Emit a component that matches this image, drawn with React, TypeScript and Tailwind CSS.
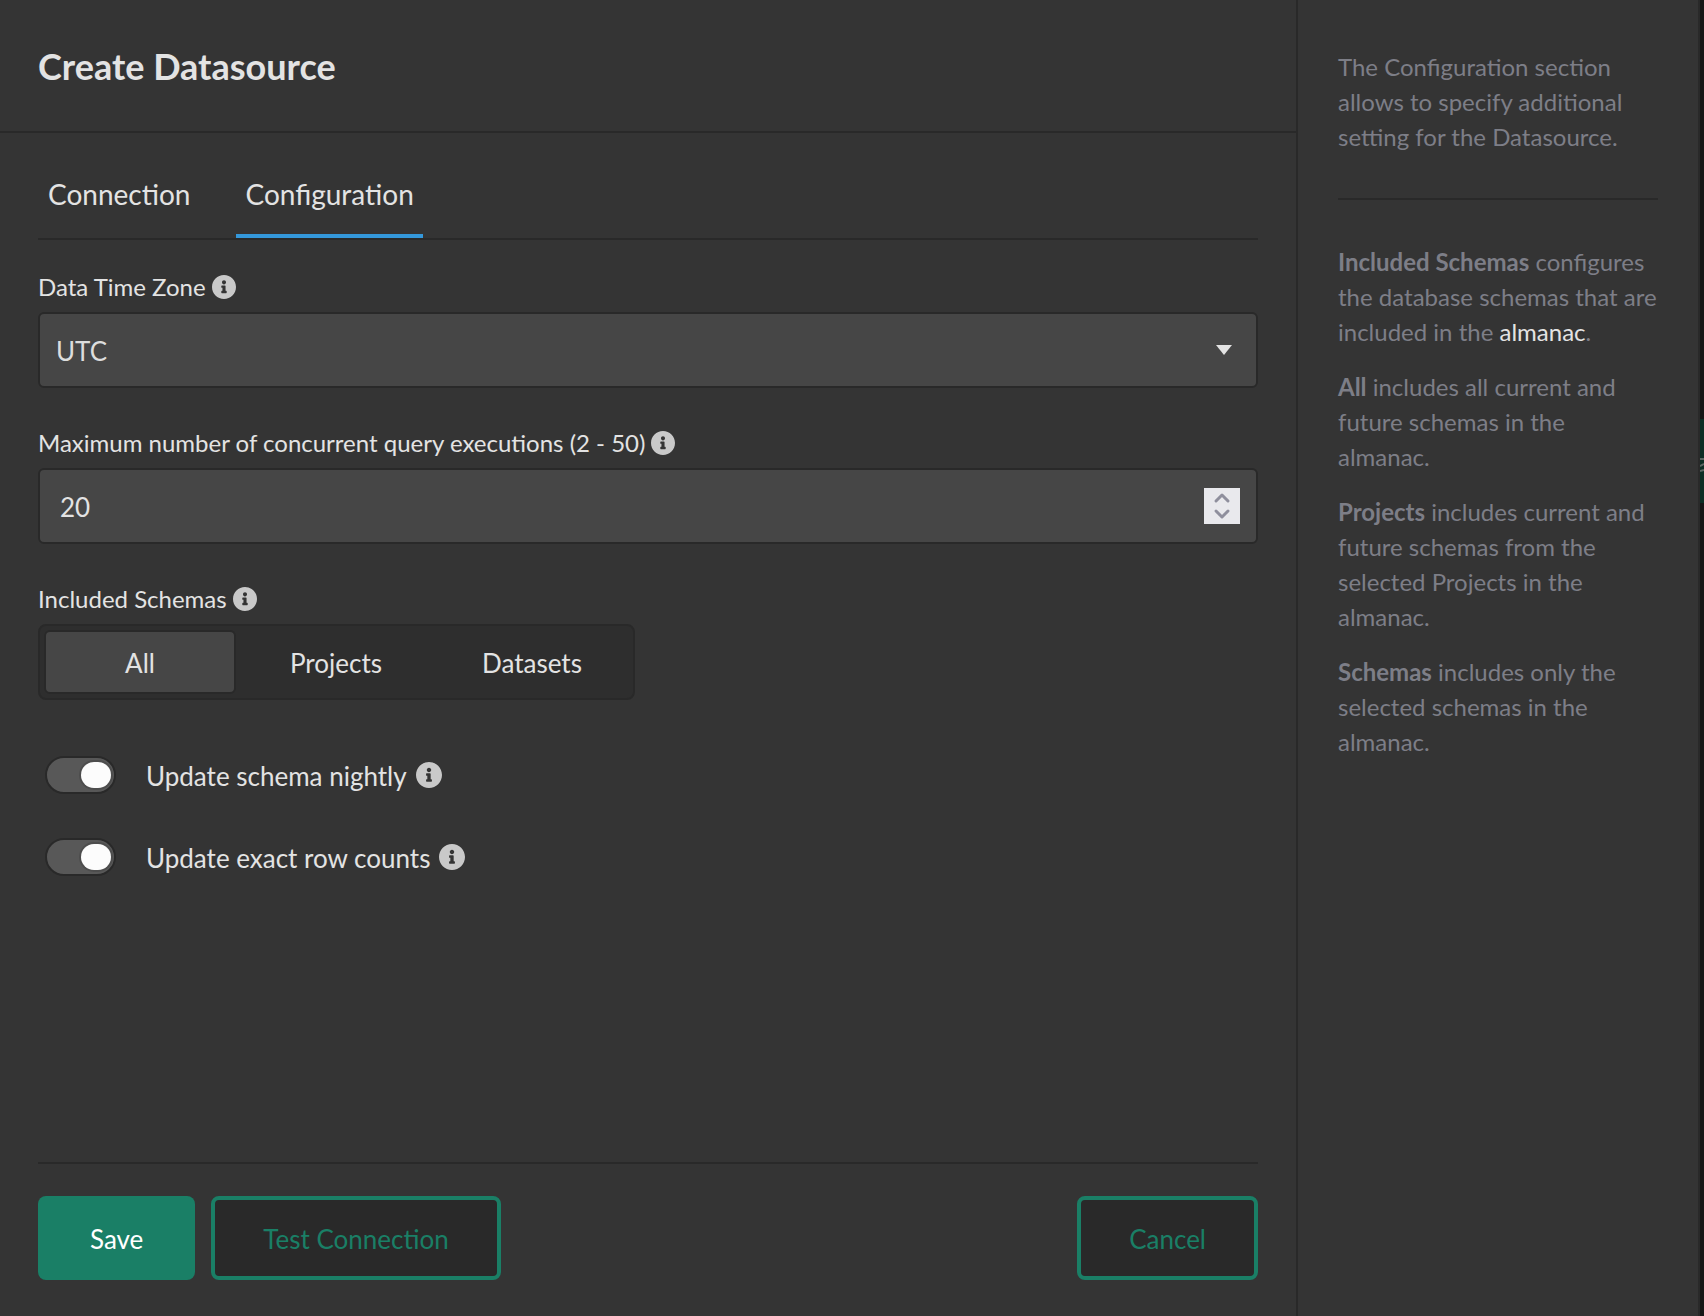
import { useState } from "react";

function InfoIcon({ large = false }: { large?: boolean }) {
  return (
    <svg viewBox="8 8 496 496" className={large ? "size-[26px] shrink-0" : "size-6 shrink-0"} role="img" aria-label="More information">
      <path
        fill="#c9c9c9"
        d="M256 8C119.043 8 8 119.083 8 256c0 136.997 111.043 248 248 248s248-111.003 248-248C504 119.083 392.957 8 256 8zm0 110c23.196 0 42 18.804 42 42s-18.804 42-42 42-42-18.804-42-42 18.804-42 42-42zm56 254c0 6.627-5.373 12-12 12h-88c-6.627 0-12-5.373-12-12v-24c0-6.627 5.373-12 12-12h12v-64h-12c-6.627 0-12-5.373-12-12v-24c0-6.627 5.373-12 12-12h64c6.627 0 12 5.373 12 12v100h12c6.627 0 12 5.373 12 12v24z"
      />
    </svg>
  );
}

function Toggle({ id, label }: { id: string; label: string }) {
  const [on, setOn] = useState(true);
  return (
    <div className="flex h-[42px] items-center pl-[7px]">
      <div className="relative flex h-[38px] w-[71px] shrink-0 items-center">
        <input
          id={id}
          type="checkbox"
          role="switch"
          checked={on}
          onChange={(e) => setOn(e.target.checked)}
          className="peer absolute inset-0 m-0 size-full cursor-pointer appearance-none rounded-full border-2 border-[#292929] bg-[#585858]"
        />
        <span className="pointer-events-none relative ml-1 h-[26px] w-[30px] rounded-full bg-[#fcfcfc] shadow-[0_0_0_2px_#4d4d4d] peer-checked:ml-9" />
      </div>
      <label htmlFor={id} className="mr-[9px] ml-[30px] pt-[2px] text-[26px] leading-10">
        {label}
      </label>
      <InfoIcon large />
    </div>
  );
}

const schemas = ["All", "Projects", "Datasets"];
const outline =
  "h-[84px] rounded-lg border-4 border-[#1a7f66] bg-[#292929] px-12 pt-[2px] text-[26px] text-[#1a7f66]";

export default function App() {
  const [tab, setTab] = useState("Configuration");
  const [schema, setSchema] = useState("All");
  const [count, setCount] = useState(20);

  return (
    <div className="flex min-h-screen bg-[#343434] font-['Lato',sans-serif] text-[#e3e3e3]">
      <main className="flex min-w-0 flex-1 flex-col">
        <header className="flex h-[133px] items-center border-b-2 border-[#292929] pl-[38px]">
          <h1 className="text-[36px] leading-[44px] font-bold">Create Datasource</h1>
        </header>
        <form className="flex flex-1 flex-col px-[38px]" onSubmit={(e) => e.preventDefault()}>
          <div role="tablist" className="flex h-[107px] items-end gap-[37px] border-b-2 border-[#292929] pl-px">
            {["Connection", "Configuration"].map((t) => (
              <button
                key={t}
                type="button"
                role="tab"
                aria-selected={t === tab}
                onClick={() => setTab(t)}
                className={
                  t === tab
                    ? "h-[88px] border-b-4 border-[#3498db] px-[9px] pt-1 text-[28px] leading-9"
                    : "h-[88px] border-b-4 border-transparent px-[9px] pt-1 text-[28px] leading-9"
                }
              >
                {t}
              </button>
            ))}
          </div>

          <div className="mt-[31px] flex h-8 items-center gap-[6px]">
            <label htmlFor="zone" className="text-2xl">Data Time Zone</label>
            <InfoIcon />
          </div>
          <div className="relative mt-[9px]">
            <select
              id="zone"
              className="block h-[76px] w-full appearance-none rounded-md border-2 border-[#292929] bg-[#464646] px-4 pt-[2px] text-[26px] text-[#dddddd]"
            >
              <option>UTC</option>
            </select>
            <svg viewBox="0 0 16 10" className="pointer-events-none absolute top-[33px] right-[26px] h-[10px] w-4">
              <path d="M0 0h16L8 10z" fill="#e3e3e3" />
            </svg>
          </div>

          <div className="mt-[39px] flex h-8 items-center gap-[6px]">
            <label htmlFor="max" className="text-2xl">Maximum number of concurrent query executions (2 - 50)</label>
            <InfoIcon />
          </div>
          <div className="mt-[9px] flex h-[76px] items-center rounded-md border-2 border-[#292929] bg-[#464646] pr-4 pl-5">
            <input
              id="max"
              type="number"
              min={2}
              max={50}
              value={count}
              onChange={(e) => setCount(Number(e.target.value))}
              className="min-w-0 flex-1 appearance-none bg-transparent pt-[2px] text-[26px] outline-none [appearance:textfield] [&::-webkit-inner-spin-button]:appearance-none"
            />
            <div className="flex size-9 flex-col bg-[#e9e9ed]">
              <button type="button" aria-label="Increase" onClick={() => setCount(Math.min(50, count + 1))} className="flex h-[18px] items-center justify-center">
                <svg viewBox="0 0 36 18" className="h-[18px] w-9">
                  <path d="M12 13l6-6 6 6" fill="none" stroke="#8f8f9d" strokeWidth="3" strokeLinecap="round" strokeLinejoin="round" />
                </svg>
              </button>
              <button type="button" aria-label="Decrease" onClick={() => setCount(Math.max(2, count - 1))} className="flex h-[18px] items-center justify-center">
                <svg viewBox="0 0 36 18" className="h-[18px] w-9">
                  <path d="M12 5l6 6 6-6" fill="none" stroke="#8f8f9d" strokeWidth="3" strokeLinecap="round" strokeLinejoin="round" />
                </svg>
              </button>
            </div>
          </div>

          <div className="mt-[39px] flex h-8 items-center gap-[6px]">
            <span id="schemas-label" className="text-2xl">Included Schemas</span>
            <InfoIcon />
          </div>
          <div role="group" aria-labelledby="schemas-label" className="mt-[9px] flex h-[76px] items-center gap-1 self-start rounded-lg border-2 border-[#292929] bg-[#2e2e2e] py-1 pr-[5px] pl-1">
            {schemas.map((s) => (
              <button
                key={s}
                type="button"
                aria-pressed={s === schema}
                onClick={() => setSchema(s)}
                className={
                  s === schema
                    ? "h-16 w-48 rounded-md border-2 border-[#292929] bg-[#464646] pt-[2px] text-[26px]"
                    : "h-16 w-48 rounded-md border-2 border-transparent pt-[2px] text-[26px]"
                }
              >
                {s}
              </button>
            ))}
          </div>

          <div className="mt-[54px] flex flex-col gap-10">
            <Toggle id="nightly" label="Update schema nightly" />
            <Toggle id="counts" label="Update exact row counts" />
          </div>

          <footer className="mt-auto flex gap-4 border-t-2 border-[#292929] pt-8 pb-9">
            <button type="submit" className="h-[84px] rounded-lg bg-[#1a7f66] px-[52px] pt-[2px] text-[26px] text-white">Save</button>
            <button type="button" className={outline}>Test Connection</button>
            <button type="button" className={outline + " ml-auto"}>Cancel</button>
          </footer>
        </form>
      </main>

      <aside className="w-[404px] shrink-0 border-x-2 border-[#292929] px-10 pt-[49px] text-2xl leading-[35px] text-[#7d7e87]">
        <p>The Configuration section allows to specify additional setting for the Datasource.</p>
        <hr className="my-11 border-t-2 border-[#292929]" />
        <div className="flex flex-col gap-5">
          <p>
            <b>Included Schemas</b> configures the database schemas that are included in the{" "}
            <a href="#almanac" className="text-[#e3e3e3]">almanac</a>.
          </p>
          <p><b>All</b> includes all current and future schemas in the almanac.</p>
          <p><b>Projects</b> includes current and future schemas from the selected Projects in the almanac.</p>
          <p><b>Schemas</b> includes only the selected schemas in the almanac.</p>
        </div>
      </aside>

      <div className="w-1 shrink-0 bg-[#161616] pt-[419px]">
        <div className="flex h-[84px] items-center bg-[#0d2e25]">
          <svg viewBox="0 0 4 16" className="mt-2 h-4 w-1" aria-hidden="true">
            <path d="M0 2h4M4 7L0 9M0 14l4-1" fill="none" stroke="#5b6763" strokeWidth="2" />
          </svg>
        </div>
      </div>
    </div>
  );
}
